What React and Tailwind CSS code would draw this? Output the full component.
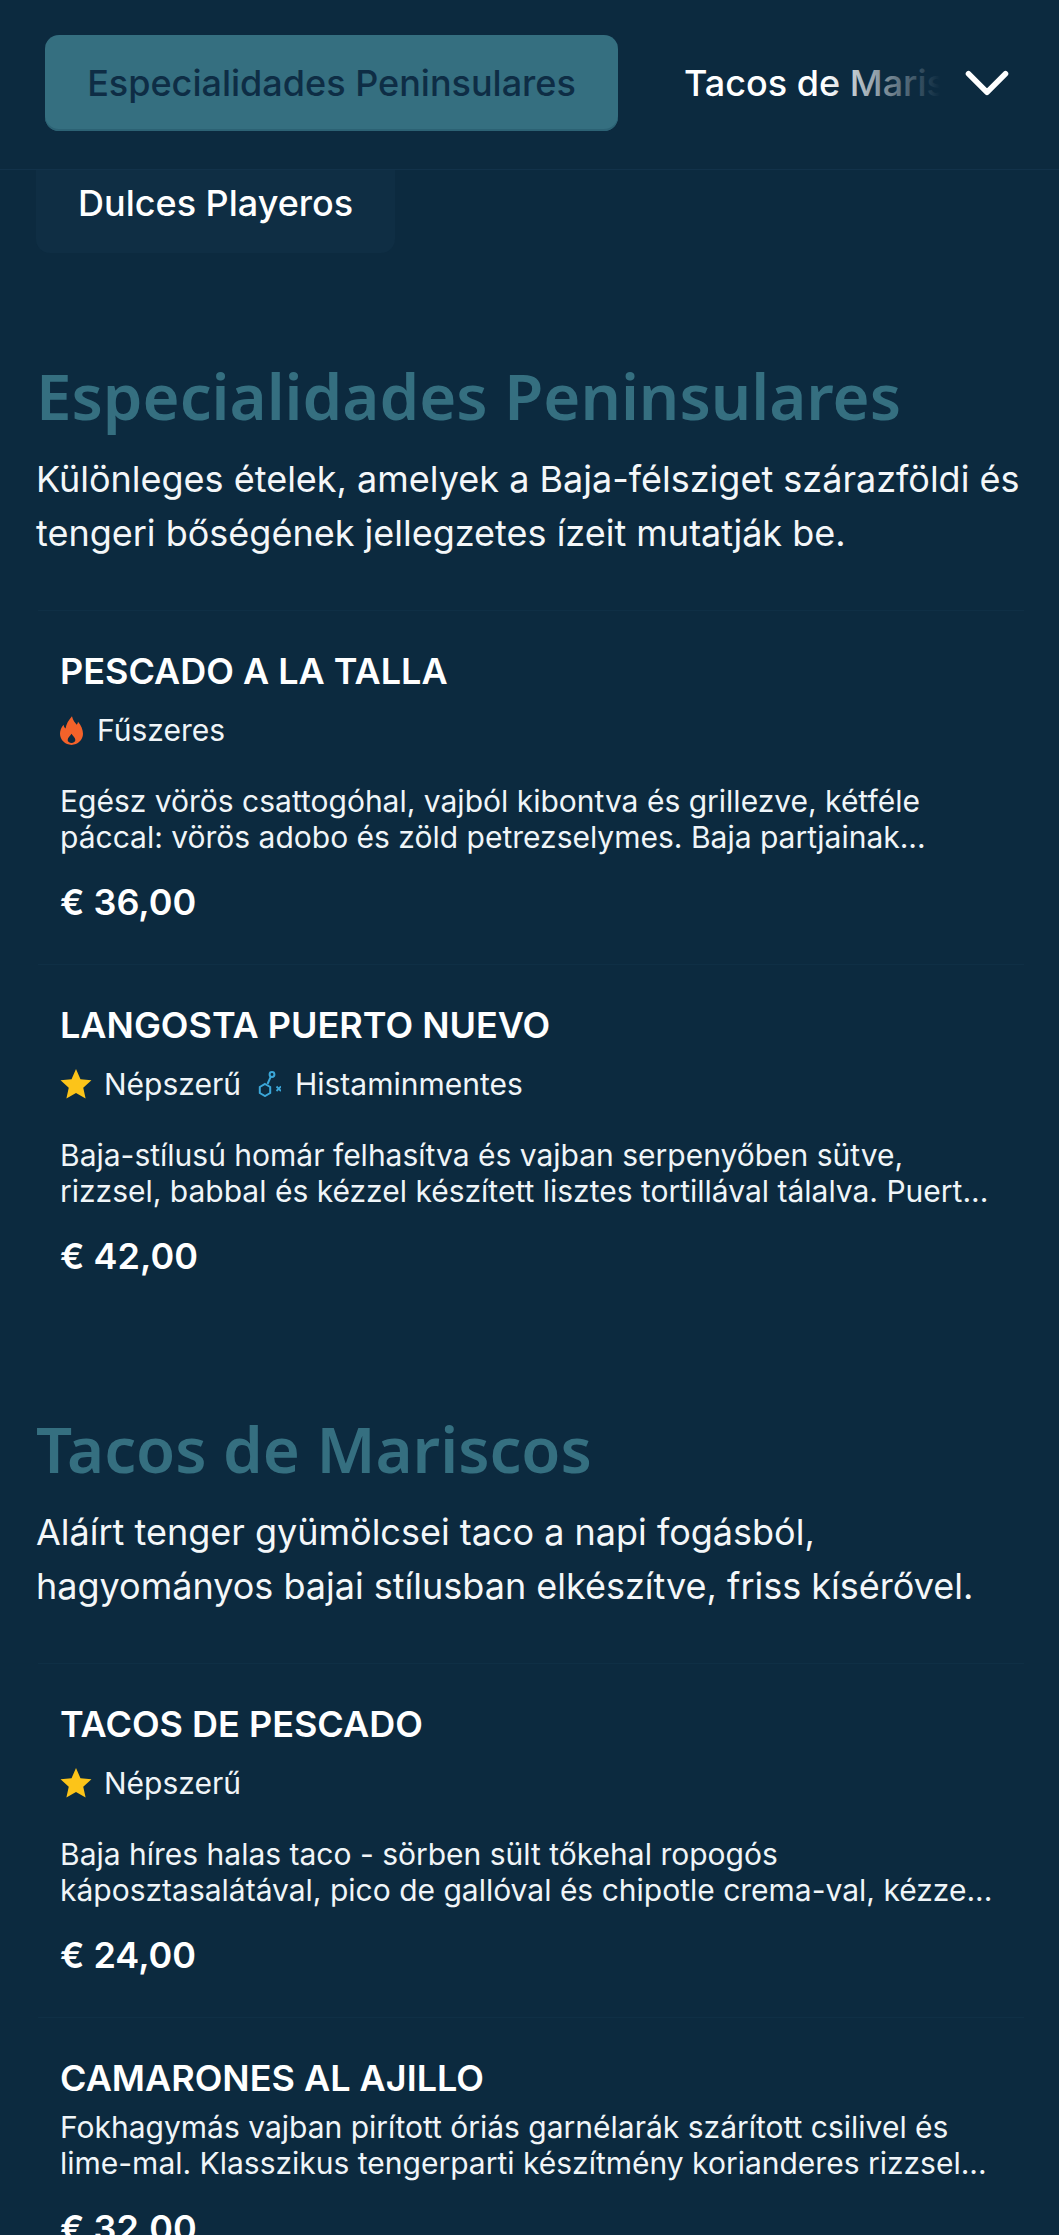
import { ChevronDown } from 'lucide-react'

const inter = "font-['Inter',sans-serif]"

const FlameIcon = () => (
    <svg width="23" height="29" viewBox="0 0 24 30" className="shrink-0">
        <path fill="#f4622a" fillRule="evenodd" d="M12.500 0c1 4.500 3 6.500 5 9 .8-1 1.200-2 1.300-3.200C22 9.500 24 14 24 18.500 24 25 18.500 30 12 30S0 25 0 18.500c0-3.500 1.300-6.800 3.800-9.500.2 1.800.8 3 2 4C6.500 8 9 4 12.500 0zM12 18.500c-1.200 2.300-4 3.800-4 6.500 0 1.700 1.800 3 4 3s4-1.300 4-3c0-2.700-2.800-4.200-4-6.500z" />
    </svg>
)

const StarIcon = () => (
    <svg width="32" height="32" viewBox="0 0 30 30" className="shrink-0">
        <path fill="#fcc419" d="M15 1l4.200 9.500 10.300 1.100-7.700 6.900 2.200 10.200L15 23.500l-9 5.200 2.200-10.200L.5 11.600l10.300-1.100z" />
    </svg>
)

const HistamineIcon = () => (
    <svg width="24" height="26" viewBox="0 0 24 26" fill="none" stroke="#3ba7d9" strokeWidth="2" className="shrink-0">
        <circle cx="15" cy="3.500" r="2.400" />
        <path d="M13.800 5.600L10.500 13" />
        <path d="M8 13l5.200 3v6L8 25l-5.200-3v-6z" />
        <path d="M19.500 15.500l4.500 4.500M24 15.500L19.500 20" strokeWidth="1.800" />
    </svg>
)

const tagIcons = { flame: FlameIcon, star: StarIcon, histamine: HistamineIcon }

const sections = [
    {
        title: 'Especialidades Peninsulares',
        lines: ['Különleges ételek, amelyek a Baja-félsziget szárazföldi és', 'tengeri bőségének jellegzetes ízeit mutatják be.'],
        items: [
            {
                name: 'PESCADO A LA TALLA',
                tags: [{ icon: 'flame', label: 'Fűszeres' }],
                desc: ['Egész vörös csattogóhal, vajból kibontva és grillezve, kétféle', 'páccal: vörös adobo és zöld petrezselymes. Baja partjainak...'],
                price: '€ 36,00',
            },
            {
                name: 'LANGOSTA PUERTO NUEVO',
                tags: [{ icon: 'star', label: 'Népszerű' }, { icon: 'histamine', label: 'Histaminmentes' }],
                desc: ['Baja-stílusú homár felhasítva és vajban serpenyőben sütve,', 'rizzsel, babbal és kézzel készített lisztes tortillával tálalva. Puert...'],
                price: '€ 42,00',
            },
        ],
    },
    {
        title: 'Tacos de Mariscos',
        lines: ['Aláírt tenger gyümölcsei taco a napi fogásból,', 'hagyományos bajai stílusban elkészítve, friss kísérővel.'],
        items: [
            {
                name: 'TACOS DE PESCADO',
                tags: [{ icon: 'star', label: 'Népszerű' }],
                desc: ['Baja híres halas taco - sörben sült tőkehal ropogós', 'káposztasalátával, pico de gallóval és chipotle crema-val, kézze...'],
                price: '€ 24,00',
            },
            {
                name: 'CAMARONES AL AJILLO',
                tags: [],
                desc: ['Fokhagymás vajban pirított óriás garnélarák szárított csilivel és', 'lime-mal. Klasszikus tengerparti készítmény korianderes rizzsel...'],
                price: '€ 32,00',
            },
        ],
    },
]

const MenuItem = ({ item }) => (
    <div className="border-t border-[#0f2f45] px-[22px] pt-[41px] pb-[41px]">
        <h3 className="text-[36px] leading-[38px] font-semibold text-white">{item.name}</h3>
        {item.tags.length > 0 ? (
            <div className="flex items-center gap-[16px] mt-[22px] mb-[35px] h-[36px]">
                {item.tags.map((tag) => {
                    const Icon = tagIcons[tag.icon]
                    return (
                        <div key={tag.label} className={`flex items-center ${tag.icon === 'star' ? 'gap-[12px]' : 'gap-[14px]'}`}>
                            <Icon />
                            <span className="text-[30px] leading-[36px] text-[#f0f5f8]">{tag.label}</span>
                        </div>
                    )
                })}
            </div>
        ) : (
            <div className="h-[12px]" />
        )}
        <p className="text-[30px] leading-[36px] text-[#f0f5f8] whitespace-nowrap">
            {item.desc[0]}<br />{item.desc[1]}
        </p>
        <p className="text-[36px] leading-[42px] font-semibold text-white mt-[26px]">{item.price}</p>
    </div>
)

const App = () => {
    return (
        <div className={`h-[2235px] overflow-hidden bg-[#0c2a3f] ${inter}`}>
            <nav className="h-[170px] border-b border-[#12324a] flex items-center pl-[45px] pb-[3px]">
                <button className="h-[96px] w-[573px] shrink-0 rounded-[14px] bg-[#356f80] shadow-[inset_0_-2px_0_#2c6274] text-[36px] font-medium text-[#0e2d45] text-center">
                    Especialidades Peninsulares
                </button>
                <div className="relative w-[262px] ml-[66px] overflow-hidden whitespace-nowrap text-[36px] font-medium text-white">
                    Tacos de Mariscos
                    <div className="absolute inset-y-0 left-[140px] right-0 bg-gradient-to-r from-transparent to-[#0c2a3f] to-95%" />
                </div>
                <ChevronDown size={74} strokeWidth={1.8} color="#ffffff" className="shrink-0 ml-[4px]" />
            </nav>

            <div className="pl-[36px]">
                <div className="w-[359px] h-[83px] rounded-b-[14px] bg-[#0f2e44] pl-[42px] pt-[3px] text-[36px] leading-[60px] font-medium text-white">
                    Dulces Playeros
                </div>
            </div>

            <main className="px-[36px]">
                {sections.map((section) => (
                    <section key={section.title} className="mt-[91px] first:mt-[103px]">
                        <h2 className="font-['Noto_Sans',sans-serif] text-[63.5px] leading-[80px] font-semibold text-[#356f80]">{section.title}</h2>
                        <p className="text-[36px] leading-[54px] text-[#f4f7f9] mt-[16px] whitespace-nowrap">
                            {section.lines[0]}<br />{section.lines[1]}
                        </p>
                        <div className="mt-[50px] ml-[2px] w-[986px]">
                            {section.items.map((item) => (
                                <MenuItem key={item.name} item={item} />
                            ))}
                        </div>
                    </section>
                ))}
            </main>
        </div>
    )
}

export default App
